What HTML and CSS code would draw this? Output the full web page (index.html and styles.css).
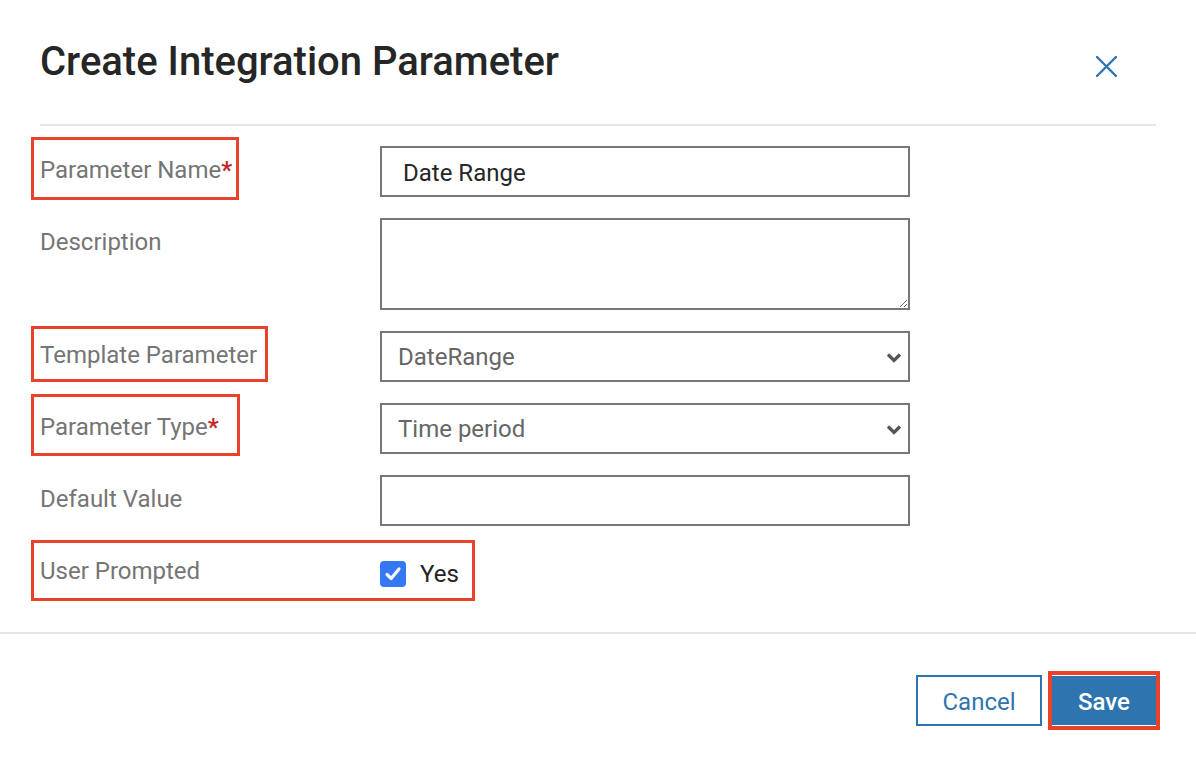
FILE: index.html
```html
<!DOCTYPE html>
<html lang="en">
<head>
<meta charset="utf-8">
<title>Create Integration Parameter</title>
<link rel="stylesheet" href="styles.css">
</head>
<body>
<div class="dialog">
  <header class="dialog-head">
    <h1 class="dialog-title">Create Integration Parameter</h1>
    <button class="close" type="button" aria-label="Close">
      <svg width="21" height="21" viewBox="0 0 21 21"><path d="M1 1 L20 20 M20 1 L1 20" stroke="#2f74b5" stroke-width="2.4" stroke-linecap="round" fill="none"/></svg>
    </button>
  </header>

  <form class="dialog-body">
    <div class="field-grid">
      <label class="field-label"><span class="mark mark-name">Parameter Name<span class="req">*</span></span></label>
      <input class="text-input text-input-dark" type="text" value="Date Range">

      <label class="field-label">Description</label>
      <textarea class="text-area"></textarea>

      <label class="field-label"><span class="mark mark-template">Template Parameter</span></label>
      <div class="select">
        <span>DateRange</span>
        <svg class="chevron" width="16" height="11" viewBox="0 0 16 11"><path d="M2 2.5 L8 8.5 L14 2.5" stroke="#555" stroke-width="3.2" fill="none"/></svg>
      </div>

      <label class="field-label"><span class="mark mark-type">Parameter Type<span class="req">*</span></span></label>
      <div class="select">
        <span>Time period</span>
        <svg class="chevron" width="16" height="11" viewBox="0 0 16 11"><path d="M2 2.5 L8 8.5 L14 2.5" stroke="#555" stroke-width="3.2" fill="none"/></svg>
      </div>

      <label class="field-label">Default Value</label>
      <input class="text-input" type="text" value="">

      <div class="flag-row">
        <span class="field-label flag-label">User Prompted</span>
        <label class="check">
          <span class="check-box">
            <svg width="20" height="20" viewBox="0 0 20 20"><path d="M4 10.5 L8.2 14.5 L16 5" stroke="#fff" stroke-width="3.2" stroke-linecap="round" stroke-linejoin="round" fill="none"/></svg>
          </span>
          <span class="check-text">Yes</span>
        </label>
      </div>
    </div>
  </form>

  <footer class="dialog-foot">
    <button class="btn btn-outline" type="button">Cancel</button>
    <button class="btn btn-primary" type="button">Save</button>
  </footer>
</div>
</body>
</html>
```

FILE: styles.css
```css
* {
  box-sizing: border-box;
}

html, body {
  margin: 0;
  padding: 0;
  background: #fff;
}

body {
  font-family: Roboto, "Liberation Sans", Arial, sans-serif;
  color: #222;
}

.dialog {
  width: 1196px;
  min-height: 766px;
}

/* header */
.dialog-head {
  display: flex;
  align-items: flex-start;
  justify-content: space-between;
  margin: 0 40px;
  padding: 40px 0 40px;
  border-bottom: 2px solid #e6e6e6;
}

.dialog-title {
  margin: 0;
  font-size: 40px;
  line-height: 44px;
  font-weight: 500;
  color: #262626;
}

.close {
  display: flex;
  padding: 0;
  margin: 16px 39px 0 0;
  border: 0;
  background: transparent;
  cursor: pointer;
}

/* form */
.dialog-body {
  margin: 0;
  padding: 20px 40px 37px;
}

.field-grid {
  display: grid;
  grid-template-columns: 340px 530px;
  row-gap: 21px;
}

.field-label {
  font-size: 24px;
  line-height: 48px;
  color: #757575;
  align-self: start;
}

.req {
  color: #c0282a;
  font-weight: 700;
}

/* annotation outlines */
.mark {
  display: inline-block;
  outline: 3px solid #e8432a;
}

.mark-name {
  padding: 6px 4px 3px 6px;
  margin: -6px -4px -3px -6px;
}

.mark-template {
  padding: 2px 8px 0 6px;
  margin: -2px -8px 0 -6px;
}

.mark-type {
  padding: 6px 18px 2px 6px;
  margin: -6px -18px -2px -6px;
}

.text-input,
.text-area,
.select {
  width: 530px;
  border: 2px solid #777;
  border-radius: 0;
  background: #fff;
  font-family: inherit;
  font-size: 24px;
  outline: none;
}

.text-input {
  height: 51px;
  padding: 3px 21px 0;
  color: #666;
}

.text-input-dark {
  color: #262626;
}

.text-area {
  height: 92px;
  padding: 10px 16px;
  resize: both;
  display: block;
}

.select {
  height: 51px;
  display: flex;
  align-items: center;
  justify-content: space-between;
  padding: 1px 6px 0 16px;
  color: #666;
}

.chevron {
  display: block;
  margin-top: 1px;
}

/* user prompted row */
.flag-row {
  grid-column: 1 / -1;
  justify-self: start;
  display: flex;
  align-items: center;
  height: 48px;
  outline: 3px solid #e8432a;
  padding: 4px 13px 3px 6px;
  margin: -4px -13px -3px -6px;
  box-sizing: content-box;
}

.flag-label {
  width: 340px;
}

.check {
  display: flex;
  align-items: center;
  gap: 14px;
  margin-top: 6px;
}

.check-box {
  width: 26px;
  height: 26px;
  border-radius: 4px;
  background: #3478f6;
  display: flex;
  align-items: center;
  justify-content: center;
}

.check-text {
  font-size: 24px;
  color: #222;
}

/* footer */
.dialog-foot {
  display: flex;
  justify-content: flex-end;
  align-items: center;
  gap: 10px;
  border-top: 2px solid #e6e6e6;
  padding: 41px 40px 38px;
}

.btn {
  height: 51px;
  font-family: inherit;
  font-size: 24px;
  cursor: pointer;
  border-radius: 0;
  padding: 2px 0 0;
}

.btn-outline {
  width: 126px;
  border: 2px solid #2e75b0;
  background: #fff;
  color: #2e75b0;
}

.btn-primary {
  width: 104px;
  border: 0;
  background: #2e75b0;
  color: #fff;
  font-weight: 500;
  outline: 4px solid #e8432a;
  box-shadow: inset 0 1px 0 #fff, inset 0 -1px 0 #fff;
}
```
